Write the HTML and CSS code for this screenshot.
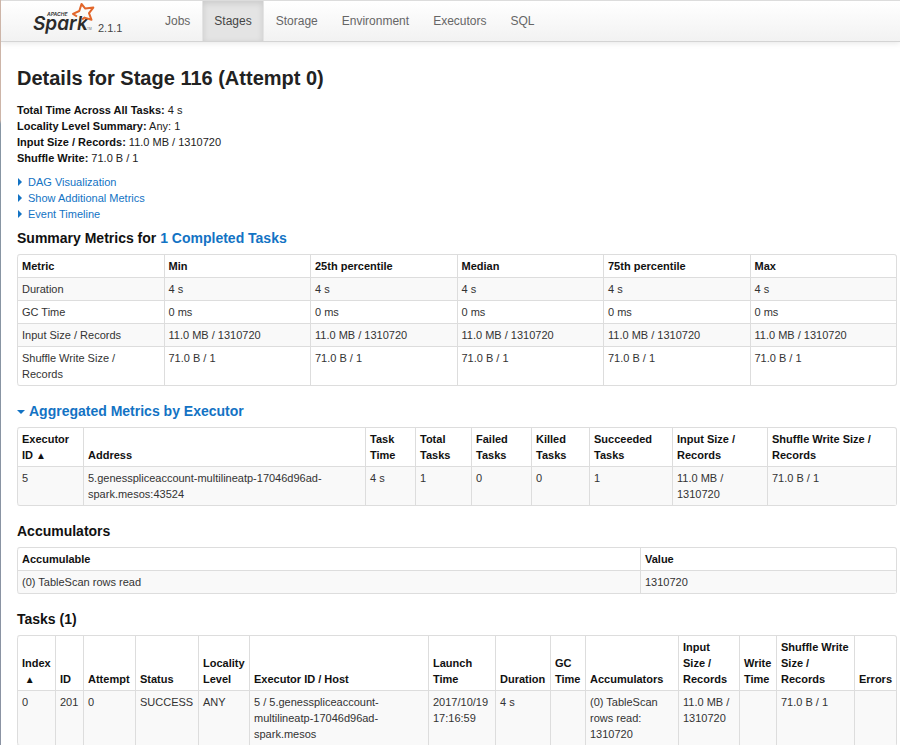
FILE: index.html
```html
<!DOCTYPE html>
<html lang="en">
<head>
<meta charset="utf-8">
<title>Details for Stage 116 (Attempt 0)</title>
<link rel="stylesheet" href="styles.css">
</head>
<body>
<header class="navbar">
  <a class="brand" href="#">
    <svg class="logo" viewBox="0 0 64 36" role="img" aria-label="Apache Spark">
      <text class="logo-apache" x="14" y="15">APACHE</text>
      <text class="logo-word" x="0" y="29">Spark</text>
      <text class="logo-tm" x="54" y="29">TM</text>
      <path class="logo-star" d="M44 15.500 L40 12.800 L46.300 10 L48.500 3 L52.300 7.600 L60.300 6.600 L56 12.200 L58.500 18.800 L51.500 16.600 L49 18.500"/>
    </svg>
    <span class="version">2.1.1</span>
  </a>
  <nav class="tabs">
    <a class="tab" href="#">Jobs</a>
    <a class="tab tab-active" href="#">Stages</a>
    <a class="tab" href="#">Storage</a>
    <a class="tab" href="#">Environment</a>
    <a class="tab" href="#">Executors</a>
    <a class="tab" href="#">SQL</a>
  </nav>
</header>
<main class="content">
  <h1>Details for Stage 116 (Attempt 0)</h1>
  <ul class="facts">
    <li><strong>Total Time Across All Tasks:</strong> 4 s</li>
    <li><strong>Locality Level Summary:</strong> Any: 1</li>
    <li><strong>Input Size / Records:</strong> 11.0 MB / 1310720</li>
    <li><strong>Shuffle Write:</strong> 71.0 B / 1</li>
  </ul>
  <ul class="toggles">
    <li><a href="#"><span class="arrow"></span>DAG Visualization</a></li>
    <li><a href="#"><span class="arrow"></span>Show Additional Metrics</a></li>
    <li><a href="#"><span class="arrow"></span>Event Timeline</a></li>
  </ul>

  <h2>Summary Metrics for <a href="#">1 Completed Tasks</a></h2>
  <table>
    <thead><tr><th>Metric</th><th>Min</th><th>25th percentile</th><th>Median</th><th>75th percentile</th><th>Max</th></tr></thead>
    <tbody>
      <tr><td>Duration</td><td>4 s</td><td>4 s</td><td>4 s</td><td>4 s</td><td>4 s</td></tr>
      <tr><td>GC Time</td><td>0 ms</td><td>0 ms</td><td>0 ms</td><td>0 ms</td><td>0 ms</td></tr>
      <tr><td>Input Size / Records</td><td>11.0 MB / 1310720</td><td>11.0 MB / 1310720</td><td>11.0 MB / 1310720</td><td>11.0 MB / 1310720</td><td>11.0 MB / 1310720</td></tr>
      <tr><td>Shuffle Write Size /<br>Records</td><td>71.0 B / 1</td><td>71.0 B / 1</td><td>71.0 B / 1</td><td>71.0 B / 1</td><td>71.0 B / 1</td></tr>
    </tbody>
  </table>

  <h2><a href="#"><span class="arrow arrow-open"></span>Aggregated Metrics by Executor</a></h2>
  <table>
    <colgroup><col class="w66"><col><col class="w50"><col class="w56"><col class="w60"><col class="w58"><col class="w83"><col class="w95"><col class="w129"></colgroup>
    <thead><tr><th>Executor ID <span class="sort">▲</span></th><th>Address</th><th>Task Time</th><th>Total Tasks</th><th>Failed Tasks</th><th>Killed Tasks</th><th>Succeeded Tasks</th><th>Input Size / Records</th><th>Shuffle Write Size / Records</th></tr></thead>
    <tbody>
      <tr><td>5</td><td>5.genesspliceaccount-multilineatp-17046d96ad-<wbr>spark.mesos:43524</td><td>4 s</td><td>1</td><td>0</td><td>0</td><td>1</td><td>11.0 MB / 1310720</td><td>71.0 B / 1</td></tr>
    </tbody>
  </table>

  <h2>Accumulators</h2>
  <table>
    <colgroup><col><col class="w256"></colgroup>
    <thead><tr><th>Accumulable</th><th>Value</th></tr></thead>
    <tbody><tr><td>(0) TableScan rows read</td><td>1310720</td></tr></tbody>
  </table>

  <h2>Tasks (1)</h2>
  <table>
    <colgroup><col class="w38"><col class="w28"><col class="w52"><col class="w63"><col class="w51"><col><col class="w67"><col class="w55"><col class="w35"><col class="w93"><col class="w61"><col class="w37"><col class="w78"><col class="w42"></colgroup>
    <thead><tr><th>Index <span class="sort">&nbsp;▲</span></th><th>ID</th><th>Attempt</th><th>Status</th><th>Locality Level</th><th>Executor ID / Host</th><th>Launch Time</th><th>Duration</th><th>GC Time</th><th>Accumulators</th><th>Input<br>Size /<br>Records</th><th>Write Time</th><th>Shuffle Write Size / Records</th><th>Errors</th></tr></thead>
    <tbody>
      <tr><td>0</td><td>201</td><td>0</td><td>SUCCESS</td><td>ANY</td><td>5 / 5.genesspliceaccount-<wbr>multilineatp-17046d96ad-<wbr>spark.mesos</td><td>2017/10/19 17:16:59</td><td>4 s</td><td></td><td>(0) TableScan rows read: 1310720</td><td>11.0 MB / 1310720</td><td></td><td>71.0 B / 1</td><td></td></tr>
    </tbody>
  </table>
</main>
</body>
</html>
```
FILE: styles.css
```css
* { box-sizing: border-box; }
html {
  height: 100%;
  overflow: hidden;
  background: linear-gradient(#cdb5a8 0, #cdb5a8 120px, #8796a3 124px, #8b93a3 100%);
}
body {
  margin: 0 0 0 1px;
  height: 100%;
  overflow: hidden;
  background: #fff;
  color: #333;
  font: 11px/16px "Liberation Sans", Arial, sans-serif;
}
a { color: #1373c4; text-decoration: none; }
ul { margin: 0; padding: 0; list-style: none; }

.navbar {
  display: flex;
  height: 42px;
  padding-left: 32px;
  border-top: 1px solid #dcdcdc;
  border-bottom: 1px solid #d4d4d4;
  background: linear-gradient(#fff, #f2f2f2);
  box-shadow: 0 1px 6px rgba(0, 0, 0, .1);
}
.brand { display: flex; width: 120px; }
.logo { width: 64px; height: 36px; overflow: visible; }
.logo-word { font: italic 600 19px Inter, sans-serif; fill: #2b2b2b; }
.logo-apache { font: italic bold 5px Inter, sans-serif; fill: #444; }
.logo-tm { font: 3px Inter, sans-serif; fill: #666; }
.logo-star { fill: none; stroke: #e2662b; stroke-width: 2; stroke-linejoin: round; }
.version { padding: 19px 0 0 1px; color: #444; }
.tabs { display: flex; }
.tab { padding: 12px 11px 11px; color: #666; font-size: 12px; border: solid transparent; border-width: 0 1px; }
.tab-active { color: #444; background: #e4e4e4; box-shadow: inset 0 2px 6px rgba(0, 0, 0, .12); }

.content { padding: 24px 3px 0 16px; }
h1 { margin: 0 0 12px; font-size: 20px; line-height: 24px; color: #222; }
h2 { margin: 0 0 8px; font-size: 14px; line-height: 16px; color: #111; }
.facts { color: #222; }
strong { color: #111; }
.toggles { margin: 8px 0; }
.arrow {
  display: inline-block;
  margin: 0 6px 0 1px;
  border: solid transparent;
  border-width: 4px 0 4px 4px;
  border-left-color: #1373c4;
}
.arrow-open { margin: 0 4px 2px 0; border-width: 4px 4px 0; border-top-color: #1373c4; border-left-color: transparent; }

table {
  width: 100%;
  margin-bottom: 17px;
  table-layout: fixed;
  border: 1px solid #ddd;
  border-left: 0;
  border-radius: 3px;
  border-collapse: separate;
  border-spacing: 0;
}
th, td { padding: 3px 4px; border-left: 1px solid #ddd; text-align: left; vertical-align: top; }
th { vertical-align: bottom; color: #111; }
td { border-top: 1px solid #ddd; }
th:first-child { border-top-left-radius: 3px; }
tbody tr:last-child td:first-child { border-bottom-left-radius: 3px; }
tbody tr:nth-child(odd) td { background: #f9f9f9; }
.sort { font-size: 10px; line-height: 10px; }

.w28 { width: 28px; }
.w35 { width: 35px; }
.w37 { width: 37px; }
.w38 { width: 38px; }
.w42 { width: 42px; }
.w50 { width: 50px; }
.w51 { width: 51px; }
.w52 { width: 52px; }
.w55 { width: 55px; }
.w56 { width: 56px; }
.w58 { width: 58px; }
.w60 { width: 60px; }
.w61 { width: 61px; }
.w63 { width: 63px; }
.w66 { width: 66px; }
.w67 { width: 67px; }
.w78 { width: 78px; }
.w83 { width: 83px; }
.w93 { width: 93px; }
.w95 { width: 95px; }
.w129 { width: 129px; }
.w256 { width: 256px; }
```
